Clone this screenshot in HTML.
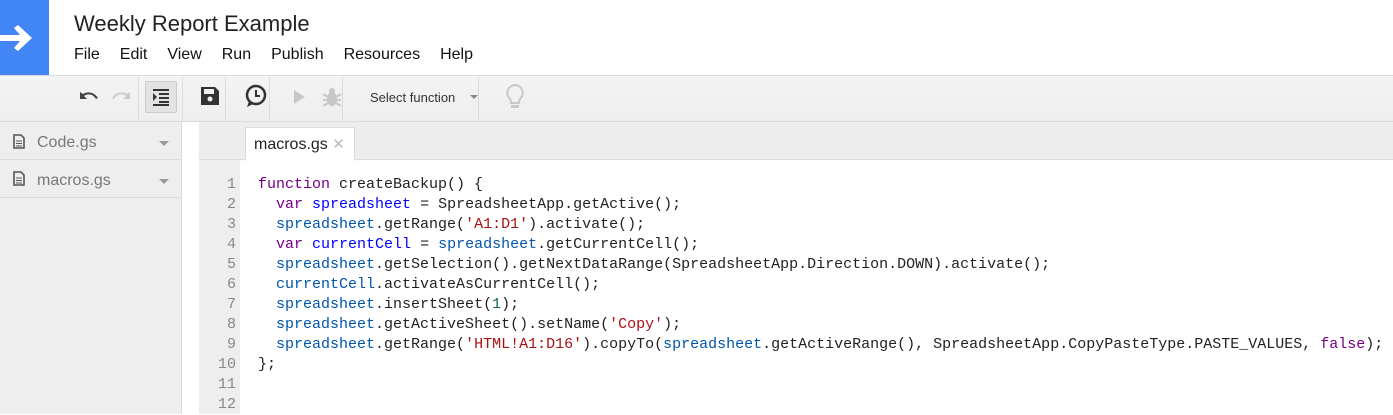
<!DOCTYPE html>
<html><head><style>
*{margin:0;padding:0;box-sizing:border-box}
body{width:1393px;height:414px;overflow:hidden;background:#fff;font-family:"Liberation Sans",Arial,sans-serif;position:relative}
.abs{position:absolute}
.mono{font-family:"Liberation Mono",monospace;font-size:15px}
.sep{position:absolute;top:77px;width:1px;height:43px;background:#dcdcdc}
.k{color:#708}.d{color:#00f}.v{color:#05a}.s{color:#a11}.n{color:#164}
</style></head><body>
<div class="abs" style="left:0;top:0;width:49px;height:75px;background:#4285f4"></div>
<svg class="abs" style="left:0;top:22px" width="36" height="32" viewBox="0 0 36 32"><path d="M0 13h20l-6-7 4-3 14 13-14 13-4-3 6-7H0z" fill="#fff"/></svg>
<div class="abs" style="left:74px;top:11px;font-size:22px;color:#222">Weekly Report Example</div>
<div class="abs" style="left:74px;top:46px;font-size:16px;color:#111;word-spacing:0">
<span style="margin-right:20px">File</span><span style="margin-right:20px">Edit</span><span style="margin-right:20px">View</span><span style="margin-right:20px">Run</span><span style="margin-right:20px">Publish</span><span style="margin-right:20px">Resources</span><span>Help</span></div>
<div class="abs" style="left:0;top:75px;width:1393px;height:47px;background:linear-gradient(#f4f4f4,#eee);border-top:1px solid #dadada;border-bottom:1px solid #dadada"></div>
<div class="sep" style="left:138px"></div><div class="sep" style="left:182px"></div><div class="sep" style="left:225px"></div><div class="sep" style="left:269px"></div><div class="sep" style="left:342px"></div><div class="sep" style="left:478px"></div>
<svg class="abs" style="left:76px;top:88px" width="60" height="16"><path d="M4 4v7h7l-3-3c4-3 9-2 12 3l2-1C18 4 12 3 7 6z" fill="#444"/><path d="M54 4v7h-7l3-3c-4-3-9-2-12 3l-2-1C40 4 46 3 51 6z" fill="#ccc"/></svg>
<div class="abs" style="left:145px;top:81px;width:32px;height:32px;background:#e3e3e3;border:1px solid #ccc;border-radius:2px"></div>
<svg class="abs" style="left:152px;top:88px" width="20" height="18"><path d="M1 1h16v2H1zM7 5h10v2H7zM7 9h10v2H7zM7 13h10v2H7zM1 16h16v2H1zM1 5l4 4-4 4z" fill="#333"/></svg>
<svg class="abs" style="left:201px;top:87px" width="18" height="18"><path d="M0 0h14l4 4v14H0z" fill="#333"/><rect x="3" y="2" width="10" height="5" fill="#f1f1f1"/><circle cx="9" cy="12" r="2.5" fill="#f1f1f1"/></svg>
<svg class="abs" style="left:244px;top:84px" width="24" height="24"><circle cx="12" cy="11" r="9" fill="none" stroke="#333" stroke-width="2.5"/><path d="M12 6v6h4" fill="none" stroke="#333" stroke-width="2"/><path d="M5 17l-2 6 6-3z" fill="#333"/></svg>
<svg class="abs" style="left:292px;top:89px" width="14" height="16"><path d="M2 1l11 7-11 7z" fill="#c8c8c8"/></svg>
<svg class="abs" style="left:321px;top:86px" width="22" height="22"><ellipse cx="11" cy="13" rx="5" ry="7" fill="#c8c8c8"/><circle cx="11" cy="5" r="3" fill="#c8c8c8"/><path d="M2 8l5 3M2 14h5M2 20l5-3M20 8l-5 3M20 14h-5M20 20l-5-3" stroke="#c8c8c8" stroke-width="2"/></svg>
<div class="abs" style="left:370px;top:90px;font-size:13px;color:#333">Select function</div>
<svg class="abs" style="left:470px;top:95px" width="8" height="5"><path d="M0 0h8L4 4z" fill="#888"/></svg>
<svg class="abs" style="left:504px;top:83px" width="22" height="28"><path d="M11 2a8 8 0 0 0-5 14c1 1 1 3 1 4h8c0-1 0-3 1-4a8 8 0 0 0-5-14z" fill="none" stroke="#c8c8c8" stroke-width="2"/><rect x="7" y="22" width="8" height="3" fill="#c8c8c8"/></svg>
<div class="abs" style="left:0;top:122px;width:182px;height:292px;background:#eee;border-right:1px solid #ddd"></div>
<div class="abs" style="left:0;top:159px;width:182px;height:1px;background:#dcdcdc"></div>
<div class="abs" style="left:0;top:197px;width:182px;height:1px;background:#dcdcdc"></div>
<svg class="abs" style="left:13px;top:134px" width="12" height="15"><path d="M1 1h7l3 3v10H1z" fill="none" stroke="#555" stroke-width="1.6"/><path d="M3 7h6M3 9.5h6M3 12h6" stroke="#555"/></svg>
<svg class="abs" style="left:13px;top:171px" width="12" height="15"><path d="M1 1h7l3 3v10H1z" fill="none" stroke="#555" stroke-width="1.6"/><path d="M3 7h6M3 9.5h6M3 12h6" stroke="#555"/></svg>
<div class="abs" style="left:37px;top:134px;font-size:16px;color:#777">Code.gs</div>
<div class="abs" style="left:37px;top:172px;font-size:16px;color:#777">macros.gs</div>
<svg class="abs" style="left:159px;top:141px" width="10" height="5"><path d="M0 0h10L5 5z" fill="#999"/></svg>
<svg class="abs" style="left:159px;top:179px" width="10" height="5"><path d="M0 0h10L5 5z" fill="#999"/></svg>
<div class="abs" style="left:199px;top:122px;width:1194px;height:38px;background:#ededed;border-bottom:1px solid #dcdcdc"></div>
<div class="abs" style="left:245px;top:127px;width:110px;height:34px;background:#fff;border:1px solid #dcdcdc;border-bottom:none"></div>
<div class="abs" style="left:254px;top:135px;font-size:16px;color:#222">macros.gs <span style="color:#bbb;font-size:15px">✕</span></div>
<div class="abs" style="left:199px;top:160px;width:41px;height:254px;background:#eee"></div>
<div class="abs mono" style="left:199px;top:175px;width:37px;text-align:right;color:#888;line-height:20px">1<br>2<br>3<br>4<br>5<br>6<br>7<br>8<br>9<br>10<br>11<br>12</div>
<pre class="abs mono" style="left:258px;top:175px;line-height:20px;color:#222"><span class="k">function</span> createBackup() {
  <span class="k">var</span> <span class="d">spreadsheet</span> = SpreadsheetApp.getActive();
  <span class="v">spreadsheet</span>.getRange(<span class="s">'A1:D1'</span>).activate();
  <span class="k">var</span> <span class="d">currentCell</span> = <span class="v">spreadsheet</span>.getCurrentCell();
  <span class="v">spreadsheet</span>.getSelection().getNextDataRange(SpreadsheetApp.Direction.DOWN).activate();
  <span class="v">currentCell</span>.activateAsCurrentCell();
  <span class="v">spreadsheet</span>.insertSheet(<span class="n">1</span>);
  <span class="v">spreadsheet</span>.getActiveSheet().setName(<span class="s">'Copy'</span>);
  <span class="v">spreadsheet</span>.getRange(<span class="s">'HTML!A1:D16'</span>).copyTo(<span class="v">spreadsheet</span>.getActiveRange(), SpreadsheetApp.CopyPasteType.PASTE_VALUES, <span class="k">false</span>);
};</pre>
</body></html>
